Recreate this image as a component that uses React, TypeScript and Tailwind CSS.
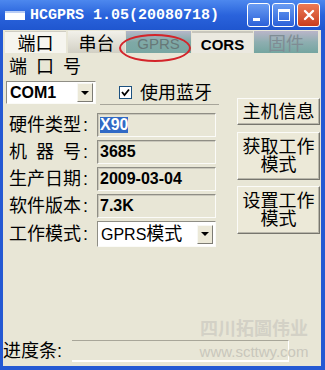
import type { ReactNode } from "react";

// window chrome colours, roughly the XP Luna frame
const body = "bg-[#e8e6d6]";

// little dropdown button used by both combo boxes
function DropButton() {
  return (
    <div className="mr-[2px] flex h-[19px] w-[16px] items-center justify-center border border-[#f8f8f4] border-b-[#7d7c74] border-r-[#7d7c74] bg-[#ece9d8]">
      <div className="h-0 w-0 border-x-[4px] border-t-[4px] border-x-transparent border-t-black" />
    </div>
  );
}

// read-only text box with the sunken border
function Field({ children }: { children: ReactNode }) {
  return (
    <div className="flex h-[24px] w-[119px] items-center border border-[#8f8e85] border-b-[#fbfbf8] border-r-[#fbfbf8] bg-[#e8e6d6] pl-[2px] text-[16px] font-bold leading-none text-black shadow-[inset_1px_1px_0_#c9c7bb]">
      {children}
    </div>
  );
}

// label spread over 72px, then the colon
function Label({ text, colon = true }: { text: string; colon?: boolean }) {
  return (
    <div className="flex w-[94px] items-center pl-[6px] text-[18px] leading-[22px] text-black">
      <div className="flex w-[72px] justify-between">
        {text.split("").map((c, i) => (
          <span key={i}>{c}</span>
        ))}
      </div>
      {colon && <span className="ml-[2px]">:</span>}
    </div>
  );
}

function Button({ children, className }: { children: ReactNode; className: string }) {
  return (
    <div
      className={
        "flex w-[83px] flex-col items-center justify-center border border-[#fbfbf8] border-b-[#77766e] border-r-[#77766e] bg-[#ece9d8] text-[18px] leading-[18px] text-black shadow-[inset_-1px_-1px_0_#b9b7ab] " +
        className
      }
    >
      {children}
    </div>
  );
}

const info = [
  ["硬件类型", "X90"],
  ["机器号", "3685"],
  ["生产日期", "2009-03-04"],
  ["软件版本", "7.3K"],
];

export default function App() {
  return (
    <div className="relative flex h-[370px] w-[325px] flex-col overflow-hidden bg-[#2459d3] font-['Liberation_Sans','Noto_Sans_CJK_SC',sans-serif]">
      {/* title bar */}
      <div className="flex h-[30px] items-center bg-gradient-to-b from-[#4d88ee] via-[#2a63dc] to-[#1f56cf] pl-[5px] pr-[5px]">
        <div className="h-[9px] w-[20px] border-t-2 border-[#b9cdf5] bg-white" />
        <div className="ml-[5px] font-['Liberation_Mono',monospace] text-[15px] font-bold leading-none text-white">
          HCGPRS 1.05(20080718)
        </div>
        <div className="ml-auto flex gap-[2px]">
          <div className="relative h-[24px] w-[23px] rounded-[3px] border border-white bg-gradient-to-b from-[#6a9cf2] to-[#2c60d8]">
            <div className="absolute bottom-[5px] left-[5px] h-[3px] w-[7px] bg-white" />
          </div>
          <div className="flex h-[24px] w-[23px] items-center justify-center rounded-[3px] border border-white bg-gradient-to-b from-[#6a9cf2] to-[#2c60d8]">
            <div className="h-[12px] w-[12px] border border-t-[3px] border-white" />
          </div>
          <div className="flex h-[24px] w-[23px] items-center justify-center rounded-[3px] border border-white bg-gradient-to-b from-[#ec7a55] to-[#c83c1c]">
            <svg width="12" height="12" viewBox="0 0 12 12">
              <path d="M2 2 L10 10 M10 2 L2 10" stroke="white" strokeWidth="2.4" strokeLinecap="round" />
            </svg>
          </div>
        </div>
      </div>

      {/* client area between the blue frame */}
      <div className={"ml-[3px] mr-[4px] flex flex-1 flex-col " + body}>
        {/* tabs */}
        <div className="mt-[1px] flex h-[22px] items-stretch pl-[2px] pr-[3px]">
          <div className="flex w-[61px] items-center justify-center border-t border-[#cfcdc3] bg-[#f6f5ef] pt-[3px] text-[18px] leading-none text-black">
            端口
          </div>
          <div className="ml-[2px] flex w-[57px] items-center justify-center bg-gradient-to-b from-[#f2f1ea] to-[#d2d0c4] pt-[3px] text-[18px] leading-none text-black">
            串台
          </div>
          <div className="ml-[1px] flex w-[65px] items-center justify-center bg-gradient-to-b from-[#b6b7c9] via-[#7fa9a6] to-[#78a6a2] pt-[3px] text-[15px] leading-none text-[#667878]">
            GPRS
          </div>
          <div className="ml-[1px] flex w-[61px] items-center justify-center border-t-2 border-[#c8c6bc] bg-[#ebe9e0] pt-[3px] text-[15px] font-bold leading-none text-black">
            CORS
          </div>
          <div className="ml-[1px] flex flex-1 items-center justify-center bg-gradient-to-b from-[#b9b5c9] via-[#8eaeb0] to-[#74a5a0] pt-[3px] text-[18px] leading-none text-[#7f8c94]">
            固件
          </div>
        </div>

        <div className="flex flex-1">
          {/* left column: port and info fields */}
          <div className="flex w-[234px] flex-col">
            <div className="flex h-[25px] items-end">
              <Label text="端口号" colon={false} />
            </div>
            <div className="ml-[3px] mt-[3px] flex h-[23px] items-center">
              <div className="flex h-[23px] w-[90px] items-center justify-between border border-[#8f8e85] border-b-[#fbfbf8] border-r-[#fbfbf8] bg-white pl-[3px] text-[16px] font-bold leading-none">
                COM1
                <DropButton />
              </div>
              <div className="ml-[23px] flex h-[13px] w-[13px] items-center justify-center border border-[#1c5180] bg-white">
                <svg width="9" height="9" viewBox="0 0 9 9">
                  <path d="M1 4 L3.5 7 L8 1.5" stroke="black" strokeWidth="1.8" fill="none" />
                </svg>
              </div>
              <div className="ml-[8px] text-[18px] leading-none">使用蓝牙</div>
            </div>
            <div className="ml-[97px] h-px w-[119px] bg-[#a7a59a]" />

            <div className="mt-[8px] flex flex-col gap-[3px]">
              {info.map(([label, value], i) => (
                <div key={label} className="flex items-center">
                  <Label text={label} />
                  <Field>
                    {i === 0 ? <span className="bg-[#316ac5] text-white">{value}</span> : value}
                  </Field>
                </div>
              ))}
              <div className="flex items-center">
                <Label text="工作模式" />
                <div className="flex h-[26px] w-[119px] items-center justify-between border border-[#8f8e85] border-b-[#fbfbf8] border-r-[#fbfbf8] bg-white pl-[3px] text-[16px] leading-none">
                  <span>
                    GPRS<span className="text-[18px]">模式</span>
                  </span>
                  <DropButton />
                </div>
              </div>
            </div>
          </div>

          {/* right column: buttons */}
          <div className="flex flex-col pt-[45px]">
            <Button className="h-[27px]">主机信息</Button>
            <Button className="mt-[7px] h-[48px]">
              <span>获取工作</span>
              <span>模式</span>
            </Button>
            <Button className="mt-[6px] h-[48px]">
              <span>设置工作</span>
              <span>模式</span>
            </Button>
          </div>
        </div>

        {/* progress bar */}
        <div className="mb-[3px] flex h-[24px] items-center">
          <div className="text-[18px] leading-none text-black">进度条:</div>
          <div className="ml-[10px] h-[22px] w-[217px] border-t border-b-2 border-r border-[#a8a699] border-b-white border-r-white" />
        </div>
      </div>
      <div className="h-[4px]" />

      {/* watermark over the bottom right */}
      <div className="absolute left-[199px] top-[320px] flex w-[110px] flex-col items-center">
        <div className="text-[18px] font-bold leading-[18px] text-[#d3d1c6]">四川拓圖伟业</div>
        <div className="mt-[6px] text-[15px] leading-none text-[#c9c7bc]">www.scttwy.com</div>
      </div>

      {/* red marker drawn around the GPRS tab */}
      <div className="absolute left-[119px] top-[34px] h-[28px] w-[72px] rounded-[50%] border-2 border-[#d3242a]" />
    </div>
  );
}
